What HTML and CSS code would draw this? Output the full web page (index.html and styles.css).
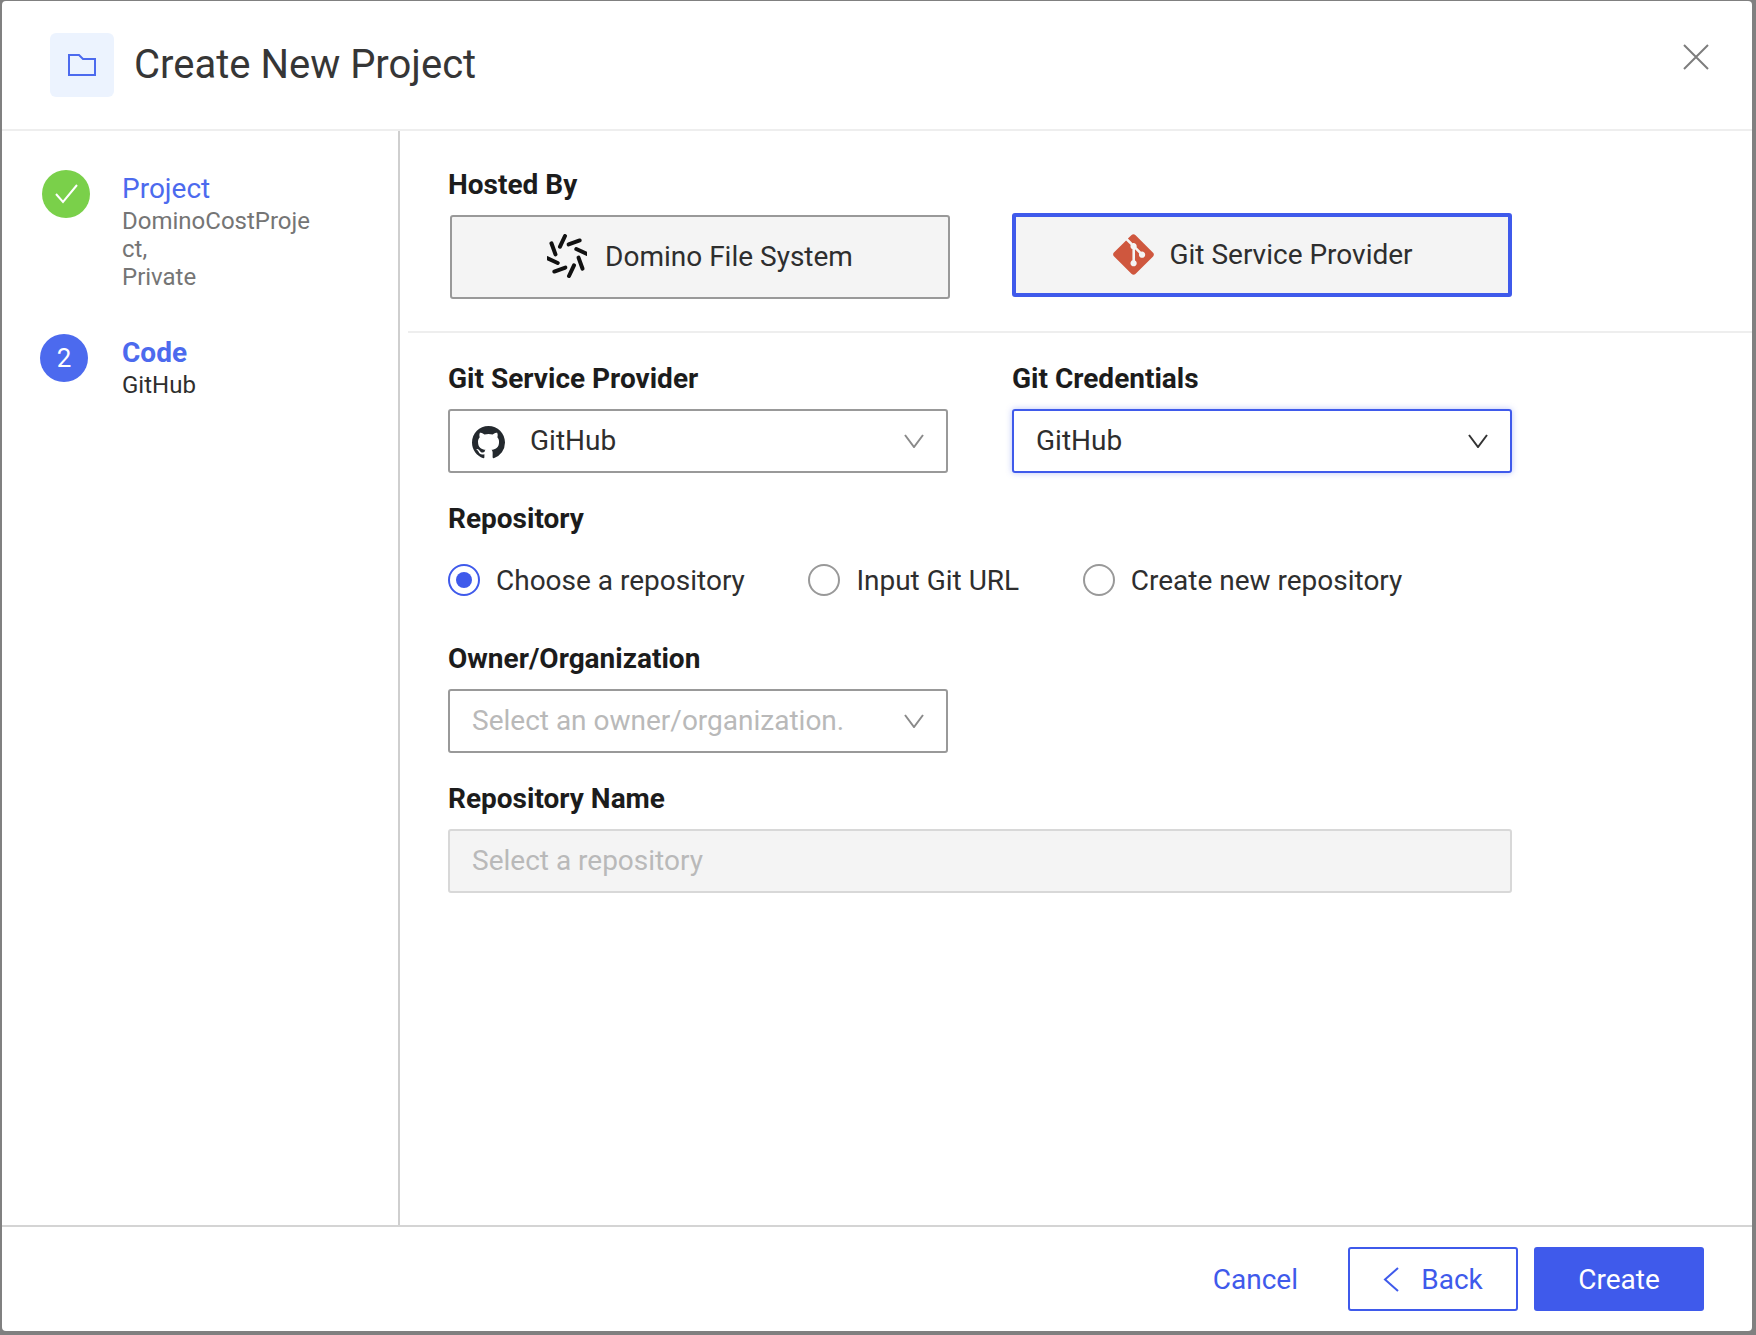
FILE: index.html
```html
<!DOCTYPE html>
<html lang="en">
<head>
    <meta charset="UTF-8" />
    <title>Create New Project</title>
    <link rel="stylesheet" href="styles.css">
</head>
<body>
    <div class="dialog">
        <header class="dialog-header">
            <div class="header-icon">
                <svg width="30" height="24" viewBox="0 0 30 24" fill="none" stroke="#4c6aee" stroke-width="2"><path d="M2 2h10l4 4h12v16H2z"/></svg>
            </div>
            <h1>Create New Project</h1>
            <svg class="close-icon" width="26" height="26" viewBox="0 0 26 26" fill="none" stroke="#7d7d7d" stroke-width="2"><path d="M1 1l24 24M25 1L1 25"/></svg>
        </header>

        <div class="dialog-body">
            <!-- Steps -->
            <aside class="steps">
                <div class="step step-done">
                    <div class="step-circle">
                        <svg width="48" height="48" viewBox="0 0 48 48" fill="none" stroke="#fff" stroke-width="2"><path d="M14 24l7 8 14-17"/></svg>
                    </div>
                    <div class="step-text">
                        <div class="step-title">Project</div>
                        <div class="step-sub">DominoCostProject,<br>Private</div>
                    </div>
                </div>
                <div class="step step-active">
                    <div class="step-circle">2</div>
                    <div class="step-text">
                        <div class="step-title">Code</div>
                        <div class="step-sub">GitHub</div>
                    </div>
                </div>
            </aside>

            <!-- Form -->
            <main class="panel">
                <div class="field-label first-label">Hosted By</div>
                <div class="two-col hosted-row">
                    <div class="host-card host-domino">
                        <svg width="40" height="44" viewBox="-20 -22 40 44" stroke="#111" stroke-width="4" stroke-linecap="round">
                            <path d="M-7-9.3L-2-20"/>
                            <path d="M-7-9.3L-2-20" transform="rotate(45)"/>
                            <path d="M-7-9.3L-2-20" transform="rotate(90)"/>
                            <path d="M-7-9.3L-2-20" transform="rotate(135)"/>
                            <path d="M-7-9.3L-2-20" transform="rotate(180)"/>
                            <path d="M-7-9.3L-2-20" transform="rotate(225)"/>
                            <path d="M-7-9.3L-2-20" transform="rotate(270)"/>
                            <path d="M-7-9.3L-2-20" transform="rotate(315)"/>
                        </svg>
                        <span>Domino File System</span>
                    </div>
                    <div class="host-card host-git">
                        <svg width="43" height="43" viewBox="0 0 97 97"><path fill="#cf573e" d="M92.71 44.408 52.591 4.291c-2.31-2.311-6.057-2.311-8.369 0l-8.33 8.332L46.459 23.19c2.456-.83 5.272-.273 7.229 1.685 1.969 1.97 2.521 4.81 1.67 7.275l10.186 10.185c2.465-.85 5.307-.3 7.275 1.671 2.75 2.75 2.75 7.206 0 9.958-2.752 2.751-7.208 2.751-9.961 0-2.068-2.07-2.58-5.11-1.531-7.658l-9.5-9.499v24.997c.67.332 1.303.774 1.861 1.332 2.75 2.75 2.75 7.206 0 9.959-2.75 2.749-7.209 2.749-9.957 0-2.75-2.754-2.75-7.21 0-9.959.68-.679 1.467-1.193 2.307-1.537v-25.23c-.84-.344-1.625-.853-2.307-1.537-2.083-2.082-2.584-5.14-1.516-7.698L31.798 16.715 4.288 44.222c-2.311 2.313-2.311 6.06 0 8.371l40.121 40.118c2.31 2.311 6.056 2.311 8.369 0L92.71 52.779c2.311-2.311 2.311-6.06 0-8.371z"/></svg>
                        <span>Git Service Provider</span>
                    </div>
                </div>

                <hr class="divider">

                <div class="two-col">
                    <div>
                        <div class="field-label">Git Service Provider</div>
                        <div class="select">
                            <svg class="github-icon" width="33" height="33" viewBox="0 0 16 16"><path fill="#24292e" d="M8 0C3.58 0 0 3.58 0 8c0 3.54 2.29 6.53 5.47 7.59.4.07.55-.17.55-.38 0-.19-.01-.82-.01-1.49-2.01.37-2.53-.49-2.69-.94-.09-.23-.48-.94-.82-1.13-.28-.15-.68-.52-.01-.53.63-.01 1.08.58 1.23.82.72 1.21 1.87.87 2.33.66.07-.52.28-.87.51-1.07-1.78-.2-3.64-.89-3.64-3.95 0-.87.31-1.59.82-2.15-.08-.2-.36-1.02.08-2.12 0 0 .67-.21 2.2.82.64-.18 1.32-.27 2-.27.68 0 1.36.09 2 .27 1.53-1.04 2.2-.82 2.2-.82.44 1.1.16 1.92.08 2.12.51.56.82 1.27.82 2.15 0 3.07-1.87 3.75-3.65 3.95.29.25.54.73.54 1.48 0 1.07-.01 1.93-.01 2.2 0 .21.15.46.55.38A8.013 8.013 0 0016 8c0-4.42-3.58-8-8-8z"/></svg>
                            <span class="select-value">GitHub</span>
                            <svg class="chevron" width="20" height="14" viewBox="0 0 20 14" fill="none" stroke="#8a8a8a" stroke-width="2"><path d="M1 1l9 12 9-12"/></svg>
                        </div>
                    </div>
                    <div>
                        <div class="field-label">Git Credentials</div>
                        <div class="select select-focus">
                            <span class="select-value">GitHub</span>
                            <svg class="chevron" width="20" height="14" viewBox="0 0 20 14" fill="none" stroke="#333" stroke-width="2"><path d="M1 1l9 12 9-12"/></svg>
                        </div>
                    </div>
                </div>

                <div class="field-label section-label">Repository</div>
                <div class="radio-row">
                    <label class="radio-item"><span class="radio radio-on"></span>Choose a repository</label>
                    <label class="radio-item"><span class="radio"></span>Input Git URL</label>
                    <label class="radio-item"><span class="radio"></span>Create new repository</label>
                </div>

                <div class="field-label owner-label">Owner/Organization</div>
                <div class="select select-half">
                    <span class="select-value placeholder">Select an owner/organization.</span>
                    <svg class="chevron" width="20" height="14" viewBox="0 0 20 14" fill="none" stroke="#8a8a8a" stroke-width="2"><path d="M1 1l9 12 9-12"/></svg>
                </div>

                <div class="field-label section-label">Repository Name</div>
                <div class="text-input placeholder">Select a repository</div>
            </main>
        </div>

        <footer class="dialog-footer">
            <a href="#" class="btn btn-link">Cancel</a>
            <a href="#" class="btn btn-outline">
                <svg width="17" height="25" viewBox="0 0 17 25" fill="none" stroke="#3f5aeb" stroke-width="2"><path d="M15 1L2 12.5 15 24"/></svg>
                Back
            </a>
            <a href="#" class="btn btn-primary">Create</a>
        </footer>
    </div>
</body>
</html>
```

FILE: styles.css
```css
* {
    margin: 0;
    padding: 0;
    box-sizing: border-box;
}

body {
    font-family: Roboto, 'Liberation Sans', sans-serif;
    background-color: #808080;
    color: #2e2e2e;
    height: 1335px;
    overflow: hidden;
}

/* Dialog */
.dialog {
    width: 1750px;
    height: 1330px;
    margin: 1px 0 0 2px;
    background: #fff;
    border-radius: 4px;
    display: flex;
    flex-direction: column;
}

.dialog-header {
    height: 130px;
    flex-shrink: 0;
    padding: 32px 43px 0 48px;
    border-bottom: 2px solid #eeeeee;
    display: flex;
    align-items: flex-start;
}

.header-icon {
    width: 64px;
    height: 64px;
    background-color: #ecf3fe;
    border-radius: 6px;
    display: flex;
    align-items: center;
    justify-content: center;
}

.dialog-header h1 {
    font-size: 40px;
    line-height: 64px;
    font-weight: 400;
    color: #363636;
    margin-left: 20px;
}

.close-icon {
    margin-left: auto;
    margin-top: 11px;
}

.dialog-body {
    flex: 1;
    display: flex;
    min-height: 0;
}

/* Steps */
.steps {
    width: 398px;
    flex-shrink: 0;
    padding: 39px 0 0 36px;
    border-right: 2px solid #cfcfcf;
}

.step {
    display: flex;
    align-items: flex-start;
}

.step-active {
    margin-top: 43px;
}

.step-circle {
    width: 48px;
    height: 48px;
    border-radius: 50%;
    flex-shrink: 0;
    display: flex;
    align-items: center;
    justify-content: center;
    color: #fff;
    font-size: 26px;
}

.step-done .step-circle {
    background-color: #7ad04a;
    margin: 0 32px 0 4px;
}

.step-active .step-circle {
    background-color: #4c6aee;
    margin: 0 34px 0 2px;
}

.step-text {
    width: 196px;
    margin-top: 2px;
}

.step-title {
    font-size: 28px;
    line-height: 34px;
    color: #4c6aee;
}

.step-active .step-title {
    font-weight: 700;
}

.step-sub {
    font-size: 24px;
    line-height: 28px;
    margin-top: 1px;
    color: #757575;
    overflow-wrap: anywhere;
}

.step-active .step-sub {
    color: #2e2e2e;
}

/* Form panel */
.panel {
    flex: 1;
    padding: 36px 0 0 48px;
}

.field-label {
    font-size: 28px;
    line-height: 36px;
    font-weight: 700;
    color: #1c1c1c;
    margin-bottom: 12px;
}

.first-label {
    margin-bottom: 10px;
}

.section-label {
    margin-top: 28px;
}

.owner-label {
    margin-top: 45px;
}

.two-col {
    display: grid;
    grid-template-columns: 500px 500px;
    column-gap: 64px;
}

.hosted-row {
    height: 86px;
}

.host-card {
    width: 500px;
    height: 84px;
    padding-bottom: 2px;
    background-color: #f4f4f4;
    border-radius: 3px;
    display: flex;
    align-items: center;
    justify-content: center;
    font-size: 28px;
}

.host-domino {
    border: 2px solid #999;
    margin: 2px 0 0 2px;
    gap: 18px;
}

.host-git {
    border: 4px solid #3f5aeb;
    gap: 14px;
}

.host-git svg {
    margin-left: 1px;
}

.divider {
    border: none;
    border-top: 2px solid #eeeeee;
    margin: 32px 0 28px -40px;
}

/* Selects and inputs */
.select {
    width: 500px;
    height: 64px;
    padding: 0 22px 2px 22px;
    border: 2px solid #999;
    border-radius: 3px;
    display: flex;
    align-items: center;
    font-size: 28px;
}

.select-focus {
    border-color: #3f5aeb;
    box-shadow: 0 0 6px rgba(63, 90, 235, 0.35);
}

.github-icon {
    margin: 4px 25px 0 0;
    flex-shrink: 0;
}

.chevron {
    margin-left: auto;
    margin-top: 2px;
}

.placeholder {
    color: #b9b9b9;
}

.text-input {
    width: 1064px;
    height: 64px;
    padding: 0 22px 2px;
    background-color: #f4f4f4;
    border: 2px solid #d8d8d8;
    border-radius: 3px;
    display: flex;
    align-items: center;
    font-size: 28px;
}

/* Radios */
.radio-row {
    display: flex;
    gap: 63.5px;
    margin-top: 27px;
    height: 32px;
    font-size: 28px;
}

.radio-item {
    display: flex;
    align-items: center;
    gap: 16px;
}

.radio {
    width: 32px;
    height: 32px;
    border: 2px solid #999;
    border-radius: 50%;
    display: flex;
    align-items: center;
    justify-content: center;
}

.radio-on {
    border-color: #3f5aeb;
}

.radio-on::after {
    content: '';
    width: 16px;
    height: 16px;
    border-radius: 50%;
    background-color: #3f5aeb;
}

/* Footer */
.dialog-footer {
    height: 106px;
    flex-shrink: 0;
    border-top: 2px solid #d4d4d4;
    padding: 20px 48px 0 0;
    display: flex;
    justify-content: flex-end;
    align-items: flex-start;
    gap: 16px;
}

.btn {
    height: 64px;
    border-radius: 3px;
    display: flex;
    align-items: center;
    justify-content: center;
    font-size: 28px;
    text-decoration: none;
    color: #3f5aeb;
}

.btn-link {
    margin-right: 34px;
}

.btn-outline {
    width: 170px;
    border: 2px solid #3f5aeb;
    gap: 21px;
}

.btn-primary {
    width: 170px;
    background-color: #3f5aeb;
    color: #fff;
}
```
